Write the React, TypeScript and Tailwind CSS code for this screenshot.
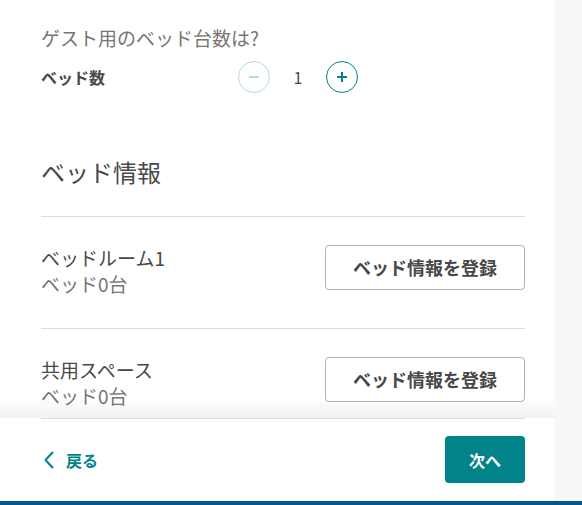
import React from "react";

const font = { fontFamily: '"Noto Sans CJK JP", "Noto Sans", sans-serif' };

function Row({ title }: { title: string }) {
  return (
    <div className="flex items-start justify-between border-b border-[#dddddd] pt-[28px] pb-[31px]">
      <div className="flex flex-col">
        <div className="text-[19px] leading-[26px] text-[#484848]">{title}</div>
        <div className="text-[19px] leading-[26px] text-[#767676]">ベッド0台</div>
      </div>
      <button className="w-[200px] h-[45px] rounded-[4px] border border-[#b0b0b0] bg-white text-[18px] font-bold text-[#484848] flex items-center justify-center">
        ベッド情報を登録
      </button>
    </div>
  );
}

export default function App() {
  return (
    <div className="w-[582px] h-[505px] flex flex-col overflow-hidden bg-white" style={font}>
      <div className="flex flex-1 min-h-0">
        <div className="w-[555px] flex flex-col bg-white">
          <div className="relative h-[418px] overflow-hidden">
            <div className="pl-[41px] pr-[30px] pt-[25px]">
              <div className="text-[19px] leading-[26px] text-[#767676]">ゲスト用のベッド台数は?</div>
              <div className="mt-[10px] flex items-center h-[32px]">
                <div className="w-[197px] text-[16px] font-bold text-[#484848]">ベッド数</div>
                <div className="w-[32px] h-[32px] rounded-full border border-[#b2dcdc] flex items-center justify-center">
                  <div className="w-[10px] h-[2px] bg-[#b2dcdc]" />
                </div>
                <div className="w-[56px] text-center text-[16px] text-[#484848]">1</div>
                <div className="w-[32px] h-[32px] rounded-full border border-[#008489] flex items-center justify-center relative">
                  <div className="w-[10px] h-[2px] bg-[#008489]" />
                  <div className="absolute w-[2px] h-[10px] bg-[#008489]" />
                </div>
              </div>
              <div className="mt-[64px] text-[24px] leading-[30px] text-[#484848] pb-[29px] border-b border-[#dddddd]">
                ベッド情報
              </div>
              <Row title="ベッドルーム1" />
              <Row title="共用スペース" />
            </div>
            <div className="absolute left-0 right-0 bottom-0 h-[22px] bg-gradient-to-b from-[rgba(255,255,255,0)] to-[rgba(0,0,0,0.05)]" />
          </div>
          <div className="ml-[41px] mr-[30px] border-t border-[#dddddd] pt-[17px] flex items-center justify-between">
            <div className="flex items-center text-[#008489] pl-[3px]">
              <svg width="10" height="18" viewBox="0 0 10 18" fill="none">
                <path d="M8.5 1.5 L1.5 9 L8.5 16.5" stroke="#008489" strokeWidth="2" strokeLinecap="round" strokeLinejoin="round" />
              </svg>
              <span className="ml-[12px] text-[16px] font-bold">戻る</span>
            </div>
            <button className="w-[80px] h-[47px] rounded-[4px] bg-[#008489] text-white text-[16px] font-bold flex items-center justify-center">
              次へ
            </button>
          </div>
        </div>
        <div className="flex-1 bg-[#f7f7f7]" />
      </div>
      <div className="h-[4px] bg-[#005a91]" />
    </div>
  );
}
